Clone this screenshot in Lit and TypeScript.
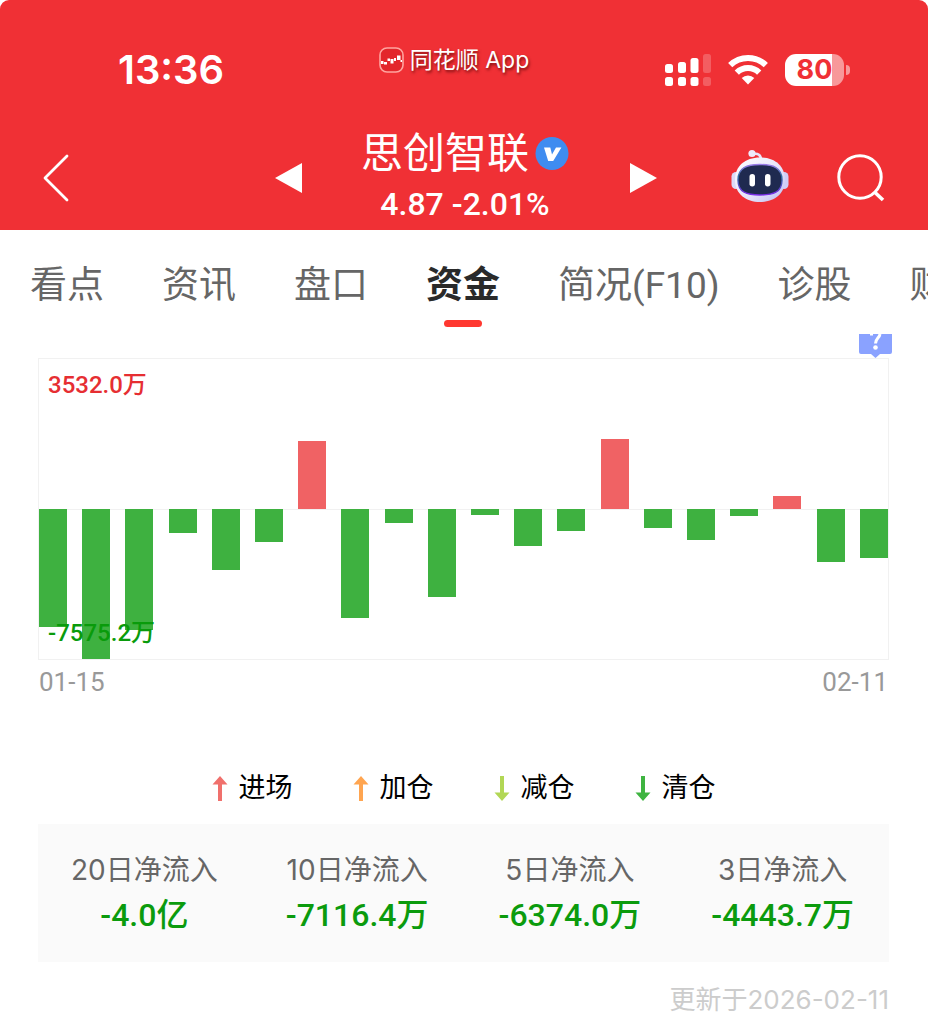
import { LitElement, html, css, svg } from "lit";
import { customElement, property, state } from "lit/decorators.js";
import { classMap } from "lit/directives/class-map.js";

const TABS = ["看点", "资讯", "盘口", "资金", "简况(F10)", "诊股", "财务"];

/** Daily net inflow, in units of 万. */
const FLOWS = [
  -5960, -7575.2, -6110, -1220, -3100, -1690, 3420, -5500, -700, -4450,
  -320, -1890, -1120, 3532, -970, -1590, -370, 680, -2690, -2470,
];

const LEGEND = [
  { label: "进场", color: "#f0706c", up: true },
  { label: "加仓", color: "#ffa550", up: true },
  { label: "减仓", color: "#b2d755", up: false },
  { label: "清仓", color: "#3fb441", up: false },
];

const SUMMARY = [
  { label: "20日净流入", value: "-4.0亿" },
  { label: "10日净流入", value: "-7116.4万" },
  { label: "5日净流入", value: "-6374.0万" },
  { label: "3日净流入", value: "-4443.7万" },
];

@customElement("status-bar")
class StatusBar extends LitElement {
  static styles = css`
    :host {
      display: grid;
      grid-template-columns: 1fr auto 1fr;
      align-items: center;
      height: 60px;
      padding: 0 78px 0 58px;
      color: #fff;
      font-family: Inter, "Noto Sans CJK SC", sans-serif;
    }
    .time {
      padding-left: 60px;
      font-size: 40px;
      line-height: 48px;
      font-weight: 600;
    }
    .source {
      display: flex;
      align-items: center;
      align-self: start;
      gap: 6px;
      height: 40px;
      font-size: 23px;
      line-height: 32px;
      text-shadow: 1px 2px 3px rgba(70, 0, 0, 0.7);
    }
    .device {
      display: flex;
      align-items: center;
      justify-content: flex-end;
      gap: 17px;
    }
    .battery {
      display: flex;
      align-items: center;
      gap: 2px;
    }
    .cell {
      width: 59px;
      height: 32px;
      border-radius: 11px;
      background: linear-gradient(90deg, #fff 80%, rgba(255, 255, 255, 0.5) 80%);
      color: #f03035;
      font-size: 27px;
      line-height: 32px;
      font-weight: 700;
      text-align: center;
    }
    .nub {
      width: 4px;
      height: 10px;
      border-radius: 0 4px 4px 0;
      background: rgba(255, 255, 255, 0.5);
    }
    svg {
      display: block;
    }
  `;

  render() {
    return html`
      <span class="time">13:36</span>
      <span class="source">
        <svg width="25" height="26" viewBox="0 0 25 26" aria-hidden="true">
          <rect x="1" y="1" width="23" height="24" rx="7" fill="#e3262b" stroke="#ffa5a0" stroke-width="1.6" />
          <path fill="#fff" d="M2 14h2.500v3H2zM5 15h3v2.500H5zM8.500 11.500h2.500v2.500H8.500zM11.500 12h3v4.500h-3zM15 11h2v3h-2zM18 8.500h3.500v4.500h-3.500zM21.500 13h1.500v2h-1.500z" />
        </svg>
        <span>同花顺 App</span>
      </span>
      <span class="device">
        <svg width="46" height="32" viewBox="0 0 46 32" fill="#fff" role="img" aria-label="信号">
          <rect x="0" y="10" width="8" height="9" rx="2.500" />
          <rect x="13" y="8" width="8" height="11" rx="2.500" />
          <rect x="25.500" y="4" width="8" height="15" rx="2.500" />
          <rect x="38" y="0" width="8" height="19" rx="2.500" opacity="0.22" />
          <rect x="0" y="23" width="8" height="9" rx="2.500" />
          <rect x="13" y="23" width="8" height="9" rx="2.500" />
          <rect x="25.500" y="23" width="8" height="9" rx="2.500" />
          <rect x="38" y="23" width="8" height="9" rx="2.500" opacity="0.22" />
        </svg>
        <svg width="40" height="32" viewBox="0 0 40 32" role="img" aria-label="无线网络">
          <g fill="none" stroke="#fff" stroke-width="6">
            <path d="M2.200 11.200a25.500 25.500 0 0 1 35.600 0" />
            <path d="M8.800 18.600a15.800 15.800 0 0 1 22.400 0" />
          </g>
          <path fill="#fff" d="M20 30.500l-6.300-6.500a9 9 0 0 1 12.600 0z" />
        </svg>
        <span class="battery"><span class="cell">80</span><span class="nub"></span></span>
      </span>
    `;
  }
}

@customElement("stock-nav")
class StockNav extends LitElement {
  static styles = css`
    :host {
      display: grid;
      grid-template-columns: 1fr minmax(0, 382px) 1fr;
      align-items: center;
      padding: 0 43px;
      color: #fff;
      font-family: Roboto, "Noto Sans CJK SC", sans-serif;
    }
    .button {
      display: block;
      padding: 0;
      border: 0;
      background: none;
      color: inherit;
      cursor: pointer;
    }
    .stock {
      display: flex;
      align-items: center;
      justify-content: space-between;
    }
    .heading {
      text-align: center;
    }
    .name {
      display: flex;
      align-items: center;
      justify-content: center;
      gap: 6px;
      margin: 0;
      font-size: 42px;
      line-height: 52px;
      font-weight: 400;
    }
    .price {
      margin: 0;
      font-size: 32px;
      line-height: 48px;
      font-weight: 500;
    }
    .tools {
      display: flex;
      align-items: center;
      justify-content: flex-end;
      gap: 48px;
    }
    svg {
      display: block;
    }
  `;

  render() {
    return html`
      <div>
        <button class="button" aria-label="返回">
          <svg width="27" height="48" viewBox="0 0 27 48" fill="none" stroke="#fff" stroke-width="2.800" stroke-linecap="round" stroke-linejoin="round">
            <path d="M24 2L2 24l22 22" />
          </svg>
        </button>
      </div>
      <div class="stock">
        <button class="button" aria-label="上一只">
          <svg width="29" height="30" viewBox="0 0 29 30" fill="#fff"><path d="M2 15L29 0v30z" /></svg>
        </button>
        <div class="heading">
          <h1 class="name">
            思创智联
            <svg width="34" height="34" viewBox="0 0 34 34" role="img" aria-label="认证">
              <circle cx="17" cy="16.500" r="16.500" fill="#3f8cf0" />
              <path fill="#fff" d="M9 10.500h6.300l1.700 7 4-7h5.400l-8.200 13.500h-5z" />
            </svg>
          </h1>
          <p class="price">4.87 -2.01%</p>
        </div>
        <button class="button" aria-label="下一只">
          <svg width="27" height="30" viewBox="0 0 27 30" overflow="visible" fill="#fff"><path d="M29 15L2 0v30z" /></svg>
        </button>
      </div>
      <div class="tools">
        <button class="button" aria-label="智能助手">
          <svg width="58" height="58" viewBox="0 0 58 58">
            <defs>
              <linearGradient id="shell" x1="0" y1="0" x2="1" y2="1">
                <stop offset="0" stop-color="#fff" />
                <stop offset="0.600" stop-color="#e4e2fa" />
                <stop offset="1" stop-color="#bdbcf0" />
              </linearGradient>
              <linearGradient id="rim" x1="0" y1="0" x2="0" y2="1">
                <stop offset="0" stop-color="#9a7ce8" />
                <stop offset="0.400" stop-color="#2c6a9c" />
                <stop offset="1" stop-color="#7a2be8" />
              </linearGradient>
            </defs>
            <path d="M22 5c5-1 8 1 8 6" fill="none" stroke="#e8e4fa" stroke-width="2.600" stroke-linecap="round" />
            <circle cx="21" cy="4.500" r="3.600" fill="#efeafb" />
            <rect x="0.500" y="23" width="9" height="17" rx="4.500" fill="#dcdaf8" />
            <rect x="48.500" y="23" width="9" height="17" rx="4.500" fill="#cfcdf6" />
            <path d="M29 8.500c15 0 25 8.500 25 22.500S43 53 29 53 4 45 4 31 14 8.500 29 8.500z" fill="url(#shell)" />
            <path d="M29 15.500c13 0 22 3 22 15.500s-9 15-22 15S7 43.500 7 31s9-15.500 22-15.500z" fill="#1f2a50" stroke="url(#rim)" stroke-width="1.400" />
            <rect x="18.500" y="25" width="5.500" height="12.500" rx="2.700" fill="#fff" />
            <rect x="34" y="25" width="5.500" height="12.500" rx="2.700" fill="#fff" />
          </svg>
        </button>
        <button class="button" aria-label="搜索">
          <svg width="48" height="48" viewBox="0 0 48 48" fill="none" stroke="#fff" stroke-width="3">
            <circle cx="23" cy="23" r="21.200" />
            <path d="M37.500 38l8.500 8" stroke-width="3.600" />
          </svg>
        </button>
      </div>
    `;
  }
}

@customElement("tab-strip")
class TabStrip extends LitElement {
  @state() active = "资金";

  static styles = css`
    :host {
      display: block;
      overflow: hidden;
      font-family: Roboto, "Noto Sans CJK SC", sans-serif;
    }
    .tabs {
      display: flex;
      gap: 58px;
      padding: 27px 0 7px 30px;
    }
    .tab {
      display: flex;
      flex: none;
      flex-direction: column;
      align-items: center;
      gap: 5px;
      color: #666;
      font-size: 37px;
      line-height: 58px;
      text-decoration: none;
    }
    .tab::after {
      content: "";
      width: 38px;
      height: 7px;
      border-radius: 4px;
    }
    .current {
      color: #2a2a2a;
      font-weight: 700;
    }
    .current::after {
      background: #ff3830;
    }
  `;

  private select(event: Event, tab: string) {
    event.preventDefault();
    this.active = tab;
  }

  render() {
    return html`<nav class="tabs">
      ${TABS.map(
        (tab) => html`<a
          href="#"
          class=${classMap({ tab: true, current: tab === this.active })}
          @click=${(e: Event) => this.select(e, tab)}
          >${tab}</a
        >`
      )}
    </nav>`;
  }
}

@customElement("flow-chart")
class FlowChart extends LitElement {
  @property({ attribute: false }) flows: number[] = [];

  static styles = css`
    :host {
      display: block;
      font-family: Roboto, "Noto Sans CJK SC", sans-serif;
    }
    .frame {
      position: relative;
      box-sizing: border-box;
      height: 302px;
      border: 1px solid #f1f1f1;
      background: linear-gradient(#f1f1f1, #f1f1f1) center / 100% 1px no-repeat;
    }
    .bars {
      display: flex;
      justify-content: space-between;
      height: 100%;
    }
    .day {
      display: flex;
      flex-direction: column;
      width: 28px;
    }
    .half {
      display: flex;
      flex: 1;
      flex-direction: column;
    }
    .above {
      justify-content: flex-end;
    }
    .in {
      background: #f06264;
    }
    .out {
      background: #3eb140;
    }
    .mark {
      position: absolute;
      left: 9px;
      font-size: 24px;
      line-height: 32px;
      font-weight: 500;
    }
    .high {
      top: 10px;
      color: #e62e32;
    }
    .low {
      bottom: 10px;
      color: #099b0b;
    }
    .dates {
      display: flex;
      justify-content: space-between;
      color: #999;
      font-size: 26px;
      line-height: 32px;
      padding: 6px 1px;
    }
  `;

  render() {
    const peak = Math.max(...this.flows.map(Math.abs));
    const bar = (v: number, cls: string) =>
      html`<div class=${cls} style="height:${(Math.abs(v) / peak) * 100}%"></div>`;
    return html`
      <div class="frame">
        <div class="bars">
          ${this.flows.map(
            (v) => html`<div class="day">
              <div class="half above">${v > 0 ? bar(v, "in") : null}</div>
              <div class="half">${v < 0 ? bar(v, "out") : null}</div>
            </div>`
          )}
        </div>
        <span class="mark high">3532.0万</span>
        <span class="mark low">-7575.2万</span>
      </div>
      <div class="dates"><span>01-15</span><span>02-11</span></div>
    `;
  }
}

@customElement("app-root")
class AppRoot extends LitElement {
  static styles = css`
    :host {
      display: block;
      min-height: 100vh;
      background: #fff;
      font-family: Inter, "Noto Sans CJK SC", sans-serif;
    }
    .header {
      padding: 40px 0 2px;
      border-radius: 9px 9px 0 0;
      background: #f03035;
    }
    .nav {
      margin-top: 28px;
    }
    .content {
      padding: 0 39px 0 38px;
    }
    .help {
      display: flex;
      justify-content: flex-end;
      height: 24px;
    }
    .hint {
      display: block;
      height: 24px;
      margin-right: -3px;
      padding: 0;
      border: 0;
      background: none;
    }
    .legend {
      display: flex;
      justify-content: center;
      gap: 60px;
      margin: 64px 0 16px;
      padding: 0;
      list-style: none;
      color: #000;
      font-size: 27px;
      line-height: 40px;
    }
    .key {
      display: flex;
      align-items: center;
      gap: 11px;
    }
    .summary {
      display: grid;
      grid-template-columns: repeat(4, 1fr);
      margin: 0;
      padding: 24px 0;
      background: #fafafa;
      text-align: center;
    }
    .label {
      color: #666;
      font-size: 28px;
      line-height: 44px;
    }
    .value {
      margin: 0;
      color: #0b9b0d;
      font-family: Roboto, "Noto Sans CJK SC", sans-serif;
      font-size: 32px;
      line-height: 46px;
      font-weight: 500;
    }
    .updated {
      margin: 22px 0 0;
      color: #ccc;
      font-size: 26px;
      line-height: 32px;
      text-align: right;
    }
    svg {
      display: block;
    }
  `;

  private arrow(up: boolean) {
    return up
      ? svg`<path d="M8 0l7.500 8.500h-5.500v16.500h-4v-16.500h-5.500z" />`
      : svg`<path d="M8 25l7.500-8.500h-5.500v-16.500h-4v16.500h-5.500z" />`;
  }

  render() {
    return html`
      <header class="header">
        <status-bar></status-bar>
        <stock-nav class="nav"></stock-nav>
      </header>
      <tab-strip></tab-strip>
      <main class="content">
        <div class="help">
          <button class="hint" aria-label="说明">
            <svg width="33" height="24" viewBox="0 0 33 24">
              <path fill="#8aa2ff" d="M0 0h33v18a2 2 0 0 1-2 2H21l-4.500 4L12 20H2a2 2 0 0 1-2-2z" />
              <path fill="none" stroke="#fff" stroke-width="3" d="M21 0c-.5 4-4.500 4.500-4.500 9.500" />
              <path fill="#fff" d="M11 0h3v1.500h-3z" />
              <circle cx="16.500" cy="13.500" r="2.300" fill="#fff" />
            </svg>
          </button>
        </div>
        <flow-chart .flows=${FLOWS}></flow-chart>
        <ul class="legend">
          ${LEGEND.map(
            (item) => html`<li class="key">
              <svg width="16" height="25" viewBox="0 0 16 25" fill=${item.color} aria-hidden="true">${this.arrow(item.up)}</svg>
              <span>${item.label}</span>
            </li>`
          )}
        </ul>
        <dl class="summary">
          ${SUMMARY.map(
            (item) => html`<div>
              <dt class="label">${item.label}</dt>
              <dd class="value">${item.value}</dd>
            </div>`
          )}
        </dl>
        <p class="updated">更新于2026-02-11</p>
      </main>
    `;
  }
}
